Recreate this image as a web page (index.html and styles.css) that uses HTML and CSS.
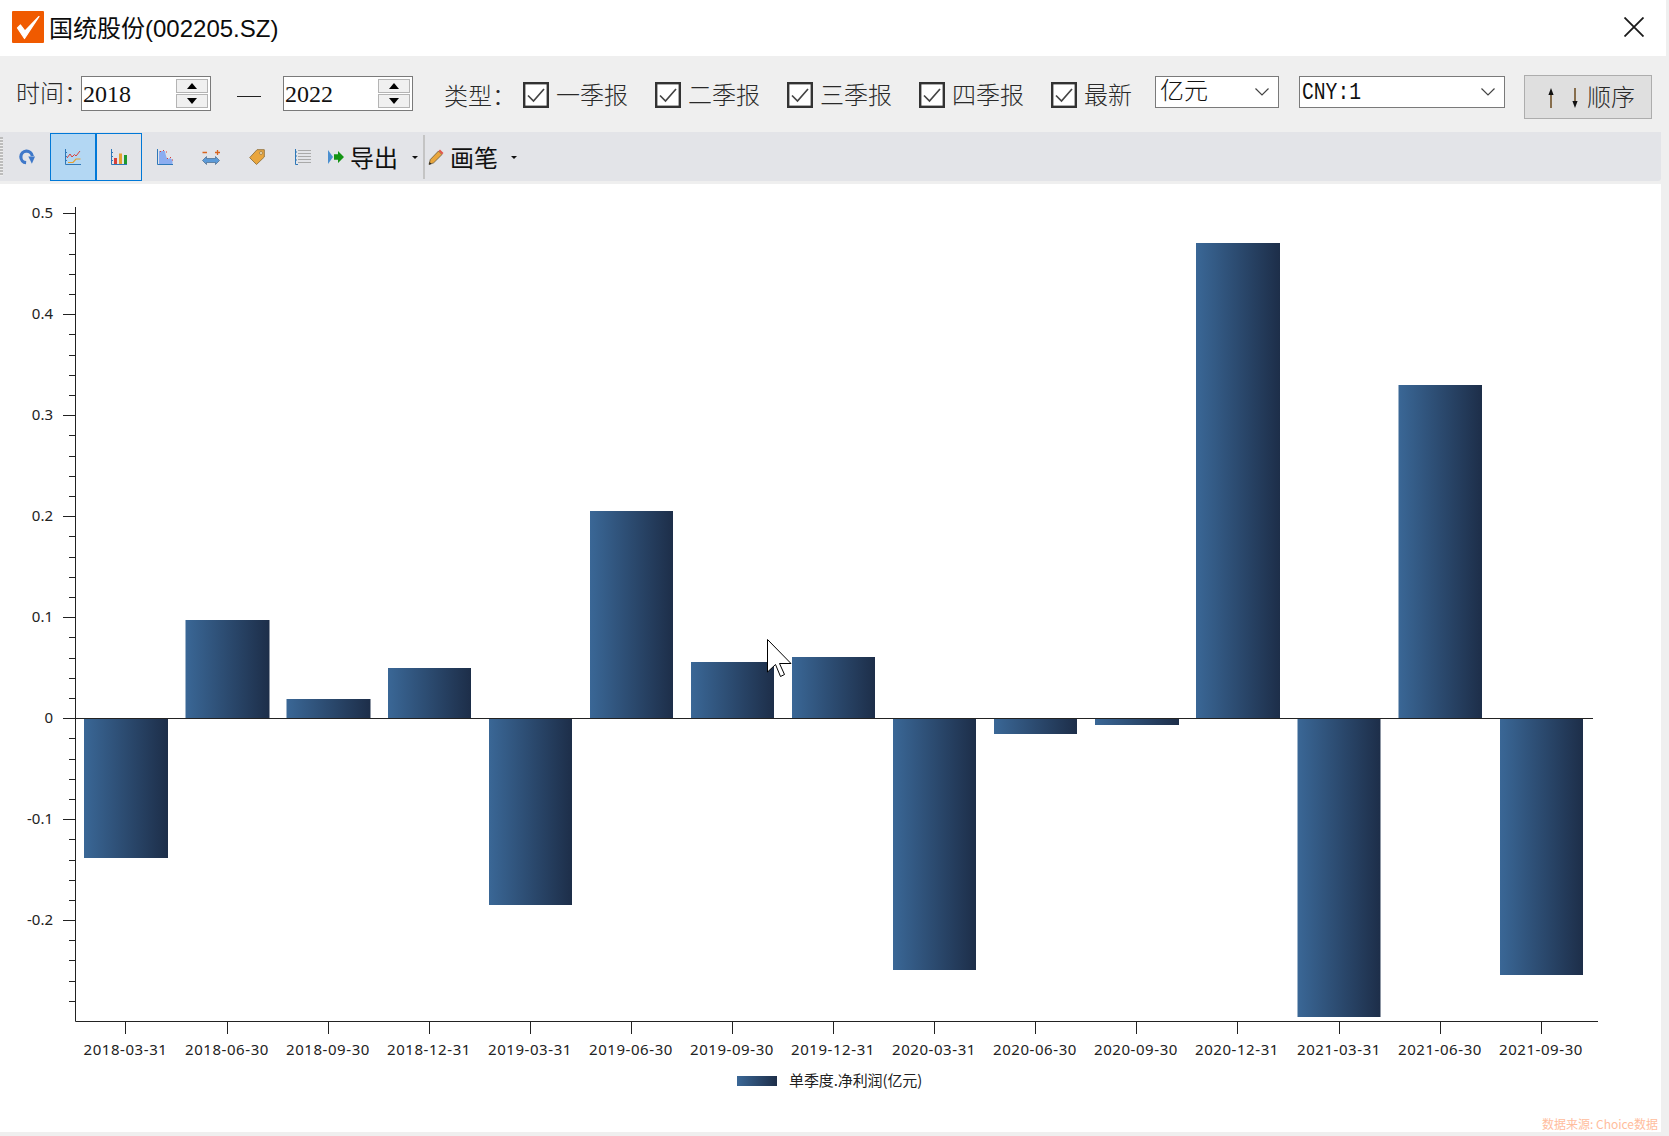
FILE: index.html
```html
<!DOCTYPE html>
<html lang="zh-CN">
<head>
<meta charset="utf-8">
<title>国统股份(002205.SZ)</title>
<link rel="stylesheet" href="styles.css">
</head>
<body>
<div class="window">
  <header class="titlebar">
    <svg class="app-icon" viewBox="0 0 32 32"><rect width="32" height="32" rx="1" fill="#f05a00"/><path d="M5.5 17 L12.5 27.5 L27 5.5 L13 20 L8.5 14 Z" fill="#fff" stroke="#fff" stroke-width="1.2" stroke-linejoin="round"/></svg>
    <h1 class="title">国统股份(002205.SZ)</h1>
    <svg class="close" viewBox="0 0 20 20"><path d="M0.5 0.5 L19.5 19.5 M19.5 0.5 L0.5 19.5" stroke="#1a1a1a" stroke-width="1.8" fill="none"/></svg>
  </header>

  <section class="filters">
    <span class="label label-time">时间：</span>
    <div class="spin">
      <span class="spin-value">2018</span>
      <div class="spin-btns">
        <span class="spin-btn"><i class="tri tri-up"></i></span>
        <span class="spin-btn"><i class="tri tri-down"></i></span>
      </div>
    </div>
    <span class="dash"></span>
    <div class="spin">
      <span class="spin-value">2022</span>
      <div class="spin-btns">
        <span class="spin-btn"><i class="tri tri-up"></i></span>
        <span class="spin-btn"><i class="tri tri-down"></i></span>
      </div>
    </div>
    <span class="label label-type">类型：</span>
    <label class="check"><svg class="box" viewBox="0 0 26 26"><rect x="1.2" y="1.2" width="23.6" height="23.6" fill="#fff" stroke="#333" stroke-width="2.4"/><path d="M5 13.5 L10.5 19 L21 7" fill="none" stroke="#444" stroke-width="1.7"/></svg><span class="check-text">一季报</span></label>
    <label class="check"><svg class="box" viewBox="0 0 26 26"><rect x="1.2" y="1.2" width="23.6" height="23.6" fill="#fff" stroke="#333" stroke-width="2.4"/><path d="M5 13.5 L10.5 19 L21 7" fill="none" stroke="#444" stroke-width="1.7"/></svg><span class="check-text">二季报</span></label>
    <label class="check"><svg class="box" viewBox="0 0 26 26"><rect x="1.2" y="1.2" width="23.6" height="23.6" fill="#fff" stroke="#333" stroke-width="2.4"/><path d="M5 13.5 L10.5 19 L21 7" fill="none" stroke="#444" stroke-width="1.7"/></svg><span class="check-text">三季报</span></label>
    <label class="check"><svg class="box" viewBox="0 0 26 26"><rect x="1.2" y="1.2" width="23.6" height="23.6" fill="#fff" stroke="#333" stroke-width="2.4"/><path d="M5 13.5 L10.5 19 L21 7" fill="none" stroke="#444" stroke-width="1.7"/></svg><span class="check-text">四季报</span></label>
    <label class="check check-last"><svg class="box" viewBox="0 0 26 26"><rect x="1.2" y="1.2" width="23.6" height="23.6" fill="#fff" stroke="#333" stroke-width="2.4"/><path d="M5 13.5 L10.5 19 L21 7" fill="none" stroke="#444" stroke-width="1.7"/></svg><span class="check-text">最新</span></label>
    <div class="combo combo-unit">
      <span class="combo-text">亿元</span>
      <svg class="chev" viewBox="0 0 14 8"><path d="M0.5 0.5 L7 7 L13.5 0.5" fill="none" stroke="#444" stroke-width="1.2"/></svg>
    </div>
    <div class="combo combo-cur">
      <span class="combo-mono">CNY:1</span>
      <svg class="chev" viewBox="0 0 14 8"><path d="M0.5 0.5 L7 7 L13.5 0.5" fill="none" stroke="#444" stroke-width="1.2"/></svg>
    </div>
    <button class="order" type="button">
      <svg class="order-arrows" viewBox="0 0 32 20"><path d="M3 20 V6 M27 0 V14" stroke="#6b4a1e" stroke-width="1.5" fill="none"/><path d="M3 0 L0.4 7 H5.6 Z M27 20 L24.4 13 H29.6 Z" fill="#111"/></svg>
      <span class="order-text">顺序</span>
    </button>
  </section>

  <nav class="toolbar">
    <span class="grip"></span>
    <span class="tool">
      <svg class="ico" viewBox="0 0 18 18"><path d="M8 15.4 A6.5 6.5 0 1 1 15 8" fill="none" stroke="#3f78c9" stroke-width="3.6"/><path d="M10.5 8.5 H18 L14.5 16.5 Z" fill="#3f78c9"/></svg>
    </span>
    <span class="tool tool-on">
      <svg class="ico" viewBox="0 0 16 16"><path d="M0.5 0 V15.5 H16 M0 3.5 H2 M0 7.5 H2 M0 11.5 H2" fill="none" stroke="#2f78b8"/><path d="M2 9 L5 5 L7 8 L9.5 5.5 L11 7 L15 2" fill="none" stroke="#d8403a"/><path d="M3 13.5 H8 L11 10 H15.5" fill="none" stroke="#e5a030" stroke-width="1.2"/></svg>
    </span>
    <span class="tool tool-sel">
      <svg class="ico" viewBox="0 0 16 16"><path d="M0.5 0 V15.5 H16 M0 3.5 H2 M0 7.5 H2 M0 11.5 H2" fill="none" stroke="#2f78b8"/><rect x="3" y="9" width="3" height="6" fill="#d8403a"/><rect x="8" y="4.5" width="3" height="10.5" fill="#e5a030"/><rect x="13" y="6" width="3" height="9" fill="#1e9a2e"/></svg>
    </span>
    <span class="tool">
      <svg class="ico" viewBox="0 0 16 16"><path d="M2 15 V2 H8 Q9 9 11 10 L13 9 L15.5 11 V15 Z" fill="#8cadf0"/><path d="M0.5 0 V15.5 H16" fill="none" stroke="#2f78b8"/><path d="M3 2.5 h1 M6 1.5 h1 M9 3 h1 M10 9.5 h1 M13 8.5 h1 M15 11 h1" stroke="#d8403a" stroke-width="1.2"/></svg>
    </span>
    <span class="tool">
      <svg class="ico ico-wide" viewBox="0 0 18 16"><path d="M0.5 3.5 H5 M13 3.5 H18 M15.5 1 V6" stroke="#d8641e" stroke-width="1.3" fill="none"/><path d="M4.5 7.5 L0.5 11.5 L4.5 15.5 V13.5 H13.5 V15.5 L17.5 11.5 L13.5 7.5 V9.5 H4.5 Z" fill="#5b9ad8" stroke="#49688a" stroke-width="0.7"/></svg>
    </span>
    <span class="tool">
      <svg class="ico" viewBox="0 0 16 16"><path d="M8 0.7 H15.3 V8 L7.5 15.5 L0.7 8.7 Z" fill="#e9a63e" stroke="#9a7a45" stroke-width="1"/><circle cx="12" cy="4" r="1.5" fill="#f5e3bc" stroke="#9a7a45" stroke-width="0.8"/></svg>
    </span>
    <span class="tool">
      <svg class="ico" viewBox="0 0 16 16"><path d="M0.5 0 V15.5 H3 M0 3 H2 M0 7 H2 M0 11 H2" fill="none" stroke="#2f78b8"/><path d="M3 1.5 H16 M3 4.5 H16 M3 7.5 H16 M3 10.5 H16 M3 13.5 H16" stroke="#a9a9a9"/></svg>
    </span>
    <span class="action">
      <svg class="ico" viewBox="0 0 16 16"><path d="M0 1 L5 8 L0 15 Z" fill="#4a8fd0"/><path d="M6 5.2 H10 V2 L16 8 L10 14 V10.8 H6 Z" fill="#149414"/></svg>
      <span class="action-text">导出</span>
      <i class="caret caret-export"></i>
    </span>
    <span class="sep"></span>
    <span class="action action-pen">
      <svg class="ico" viewBox="0 0 16 16"><path d="M1 15.5 L2.3 10.5 L10.5 2 L14 5.5 L5.7 13.8 Z" fill="#e9a63e" stroke="#6a5a3a" stroke-width="0.8"/><path d="M10.5 2 L12 0.5 L15.5 4 L14 5.5 Z" fill="#e2574c"/><path d="M1 15.5 L1.6 13 L3.5 14.9 Z" fill="#222"/></svg>
      <span class="action-text">画笔</span>
      <i class="caret"></i>
    </span>
  </nav>
  <div class="toolbar-gap"></div>

  <main class="chart-pane">
    <svg class="chart" viewBox="0 184 1661 948">
      <defs>
        <linearGradient id="barFill"><stop offset="0" stop-color="#3a6796"/><stop offset="1" stop-color="#1d2e49"/></linearGradient>
      </defs>

      <g fill="url(#barFill)">
        <rect x="84" y="718" width="84" height="140"/>
        <rect x="185.5" y="620" width="84" height="98"/>
        <rect x="286.5" y="699" width="84" height="19"/>
        <rect x="388" y="668" width="83" height="50"/>
        <rect x="489" y="718" width="83" height="187"/>
        <rect x="590" y="511" width="83" height="207"/>
        <rect x="691" y="662" width="83" height="56"/>
        <rect x="792" y="657" width="83" height="61"/>
        <rect x="893" y="718" width="83" height="252"/>
        <rect x="994" y="718" width="83" height="16"/>
        <rect x="1095" y="718" width="84" height="7"/>
        <rect x="1196" y="243" width="84" height="475"/>
        <rect x="1297.5" y="718" width="83" height="299"/>
        <rect x="1398.5" y="385" width="83.5" height="333"/>
        <rect x="1500" y="718" width="83" height="257"/>
      </g>

      <g class="axis">
        <path d="M75.5 207 V1021.5 H1598"/>
        <path d="M75.5 718.5 H1593"/>
        <path d="M63 213.5 H75 M63 314.5 H75 M63 415.5 H75 M63 516.5 H75 M63 617.5 H75 M63 718.5 H75 M63 819.5 H75 M63 920.5 H75"/>
        <path d="M69 233.5 H75 M69 254.5 H75 M69 274.5 H75 M69 294.5 H75 M69 334.5 H75 M69 355.5 H75 M69 375.5 H75 M69 395.5 H75 M69 435.5 H75 M69 456.5 H75 M69 476.5 H75 M69 496.5 H75 M69 536.5 H75 M69 557.5 H75 M69 577.5 H75 M69 597.5 H75 M69 637.5 H75 M69 658.5 H75 M69 678.5 H75 M69 698.5 H75 M69 738.5 H75 M69 759.5 H75 M69 779.5 H75 M69 799.5 H75 M69 839.5 H75 M69 860.5 H75 M69 880.5 H75 M69 900.5 H75 M69 940.5 H75 M69 960.5 H75 M69 981.5 H75 M69 1001.5 H75"/>
        <path d="M125.5 1021 V1034 M227.5 1021 V1034 M328.5 1021 V1034 M429.5 1021 V1034 M530.5 1021 V1034 M631.5 1021 V1034 M732.5 1021 V1034 M833.5 1021 V1034 M934.5 1021 V1034 M1035.5 1021 V1034 M1136.5 1021 V1034 M1237.5 1021 V1034 M1339.5 1021 V1034 M1440.5 1021 V1034 M1541.5 1021 V1034"/>
      </g>

      <g class="y-labels">
        <text x="53" y="218">0.5</text>
        <text x="53" y="319">0.4</text>
        <text x="53" y="420">0.3</text>
        <text x="53" y="521">0.2</text>
        <text x="53" y="622">0.1</text>
        <text x="53" y="723">0</text>
        <text x="53" y="824">-0.1</text>
        <text x="53" y="925">-0.2</text>
      </g>

      <g class="x-labels">
        <text x="125.5" y="1055">2018-03-31</text>
        <text x="227" y="1055">2018-06-30</text>
        <text x="328" y="1055">2018-09-30</text>
        <text x="429" y="1055">2018-12-31</text>
        <text x="530" y="1055">2019-03-31</text>
        <text x="631" y="1055">2019-06-30</text>
        <text x="732" y="1055">2019-09-30</text>
        <text x="833" y="1055">2019-12-31</text>
        <text x="934" y="1055">2020-03-31</text>
        <text x="1035" y="1055">2020-06-30</text>
        <text x="1136" y="1055">2020-09-30</text>
        <text x="1237" y="1055">2020-12-31</text>
        <text x="1339" y="1055">2021-03-31</text>
        <text x="1440" y="1055">2021-06-30</text>
        <text x="1541" y="1055">2021-09-30</text>
      </g>

      <rect x="737" y="1076" width="40" height="10" fill="url(#barFill)"/>
      <text class="legend" x="789" y="1086">单季度.净利润(亿元)</text>
      <text class="source" x="1658" y="1129">数据来源: Choice数据</text>

      <path class="cursor" d="M767.5 639.5 V672 L775.5 664.5 L780.5 676.5 L784.5 674.5 L779.5 663.5 H791 Z"/>
    </svg>
  </main>
</div>
</body>
</html>
```

FILE: styles.css
```css
* { box-sizing: border-box; }

html, body {
  margin: 0;
  height: 100%;
  background: #efefef;
}

.window {
  width: 1669px;
  height: 1136px;
  display: flex;
  flex-direction: column;
  font-family: "Liberation Sans", "Noto Sans CJK SC", sans-serif;
  color: #111;
  overflow: hidden;
}

/* title */
.titlebar {
  height: 56px;
  width: 1666px;
  background: #fff;
  display: flex;
  align-items: center;
  padding: 0 22px 0 12px;
}
.app-icon { width: 32px; height: 32px; flex: none; margin-top: -2px; }
.title {
  margin: -4px 0 0 5px;
  font-size: 24px;
  font-weight: 400;
  flex: 1;
  color: #0c0c0c;
}
.close { width: 20px; height: 20px; margin-top: -2px; }

/* filter row */
.filters {
  height: 76px;
  width: 1666px;
  background: #efefef;
  display: flex;
  align-items: flex-start;
  padding: 20px 0 0 16px;
  font-family: "Liberation Serif", "Noto Sans CJK SC", serif;
  font-size: 24px;
  font-weight: 300;
  color: #2a2a2a;
}
.label { line-height: 36px; flex: none; white-space: nowrap; font-feature-settings: "palt"; }
.label-time { width: 65px; }
.label-type { width: 79px; margin: 3px 0 0 31px; }

.spin {
  width: 130px;
  height: 35px;
  flex: none;
  background: #fff;
  border: 1px solid #7a7a7a;
  display: flex;
  align-items: center;
  justify-content: space-between;
  padding: 2px 2px 2px 1px;
  color: #111;
}
.spin-value { line-height: 28px; }
.spin-btns { display: flex; flex-direction: column; gap: 1px; }
.spin-btn {
  width: 32px;
  height: 14px;
  background: #f0f0f0;
  border: 1px solid #b4b4b4;
  display: flex;
  align-items: center;
  justify-content: center;
}
.tri { width: 0; height: 0; border-left: 5px solid transparent; border-right: 5px solid transparent; }
.tri-up { border-bottom: 6px solid #000; }
.tri-down { border-top: 6px solid #000; }

.dash {
  width: 24px;
  height: 1px;
  flex: none;
  background: #222;
  margin: 20px 22px 0 26px;
}

.check {
  width: 132px;
  flex: none;
  display: flex;
  align-items: center;
  gap: 7px;
  height: 26px;
  margin-top: 6px;
  white-space: nowrap;
}
.check-last { width: 104px; }
.check-text { margin-top: -4px; }
.box { width: 26px; height: 26px; flex: none; }

.combo {
  height: 32px;
  flex: none;
  background: #fff;
  border: 1px solid #7a7a7a;
  display: flex;
  align-items: center;
  justify-content: space-between;
  color: #111;
  white-space: nowrap;
}
.combo-unit { width: 124px; padding: 0 9px 0 4px; }
.combo-cur { width: 206px; margin-left: 20px; padding: 0 9px 0 2px; }
.combo-text { line-height: 28px; margin-top: -3px; }
.combo-mono {
  display: inline-block;
  font-family: "Liberation Mono", monospace;
  font-size: 24px;
  font-weight: 400;
  line-height: 28px;
  transform: scaleX(0.82);
  transform-origin: left center;
  margin-top: 1px;
}
.chev { width: 14px; height: 8px; flex: none; }

.order {
  width: 128px;
  height: 44px;
  flex: none;
  margin: -1px 0 0 19px;
  background: #dfdfdf;
  border: 1px solid #adadad;
  padding: 0 0 0 23px;
  display: flex;
  align-items: center;
  gap: 7px;
  font: inherit;
  color: #2a2a2a;
}
.order-arrows { width: 32px; height: 20px; flex: none; margin-top: 2px; }
.order-text { margin-top: -4px; }

/* toolbar */
.toolbar {
  height: 49px;
  width: 1661px;
  background: #e3e4e8;
  display: flex;
  align-items: center;
  padding: 1px 0 0 4px;
  border-bottom-right-radius: 3px;
  position: relative;
  font-family: "Noto Sans CJK SC", sans-serif;
  font-size: 24px;
  color: #111;
}
.grip {
  position: absolute;
  left: 0;
  top: 5px;
  width: 3px;
  height: 39px;
  background: repeating-linear-gradient(to bottom, #bcbcbc 0 2px, #eee 2px 3px);
}
.tool {
  width: 46px;
  height: 48px;
  flex: none;
  display: flex;
  align-items: center;
  justify-content: center;
}
.tool-on { background: #b3d7f3; border: 1px solid #0078d7; }
.tool-sel { border: 1px solid #0078d7; }
.ico { width: 16px; height: 16px; flex: none; display: block; }
.ico-wide { width: 18px; }

.action {
  display: flex;
  align-items: center;
  flex: none;
  height: 48px;
  margin-left: 2px;
}
.action-text { margin-left: 6px; margin-top: -1px; line-height: 48px; white-space: nowrap; }
.caret {
  width: 0;
  height: 0;
  border-left: 3px solid transparent;
  border-right: 3px solid transparent;
  border-top: 3px solid #111;
  margin-left: 14px;
}
.caret-export { margin-right: 5px; }
.sep { width: 2px; height: 44px; background: #c4c4c4; flex: none; }
.action-pen { margin-left: 3px; }
.action-pen .caret { margin-left: 13px; }

.toolbar-gap { height: 3px; width: 1661px; background: #efefef; flex: none; }

/* chart */
.chart-pane {
  width: 1661px;
  height: 948px;
  background: #fff;
  flex: none;
}
.chart { display: block; width: 1661px; height: 948px; }
.axis path { fill: none; stroke: #222; stroke-width: 1; }
.y-labels text, .x-labels text {
  font-family: "Noto Sans", sans-serif;
  font-size: 15px;
  fill: #222;
}
.y-labels text { text-anchor: end; }
.x-labels text { text-anchor: middle; letter-spacing: 0.55px; }
.legend {
  font-family: "Noto Sans CJK SC", sans-serif;
  font-size: 15px;
  letter-spacing: -0.1px;
  fill: #222;
}
.source {
  font-family: "Noto Sans CJK SC", sans-serif;
  font-size: 12px;
  text-anchor: end;
  white-space: pre;
  fill: #ffbd9d;
}
.cursor { fill: #fff; stroke: #000; stroke-width: 1; }
```
